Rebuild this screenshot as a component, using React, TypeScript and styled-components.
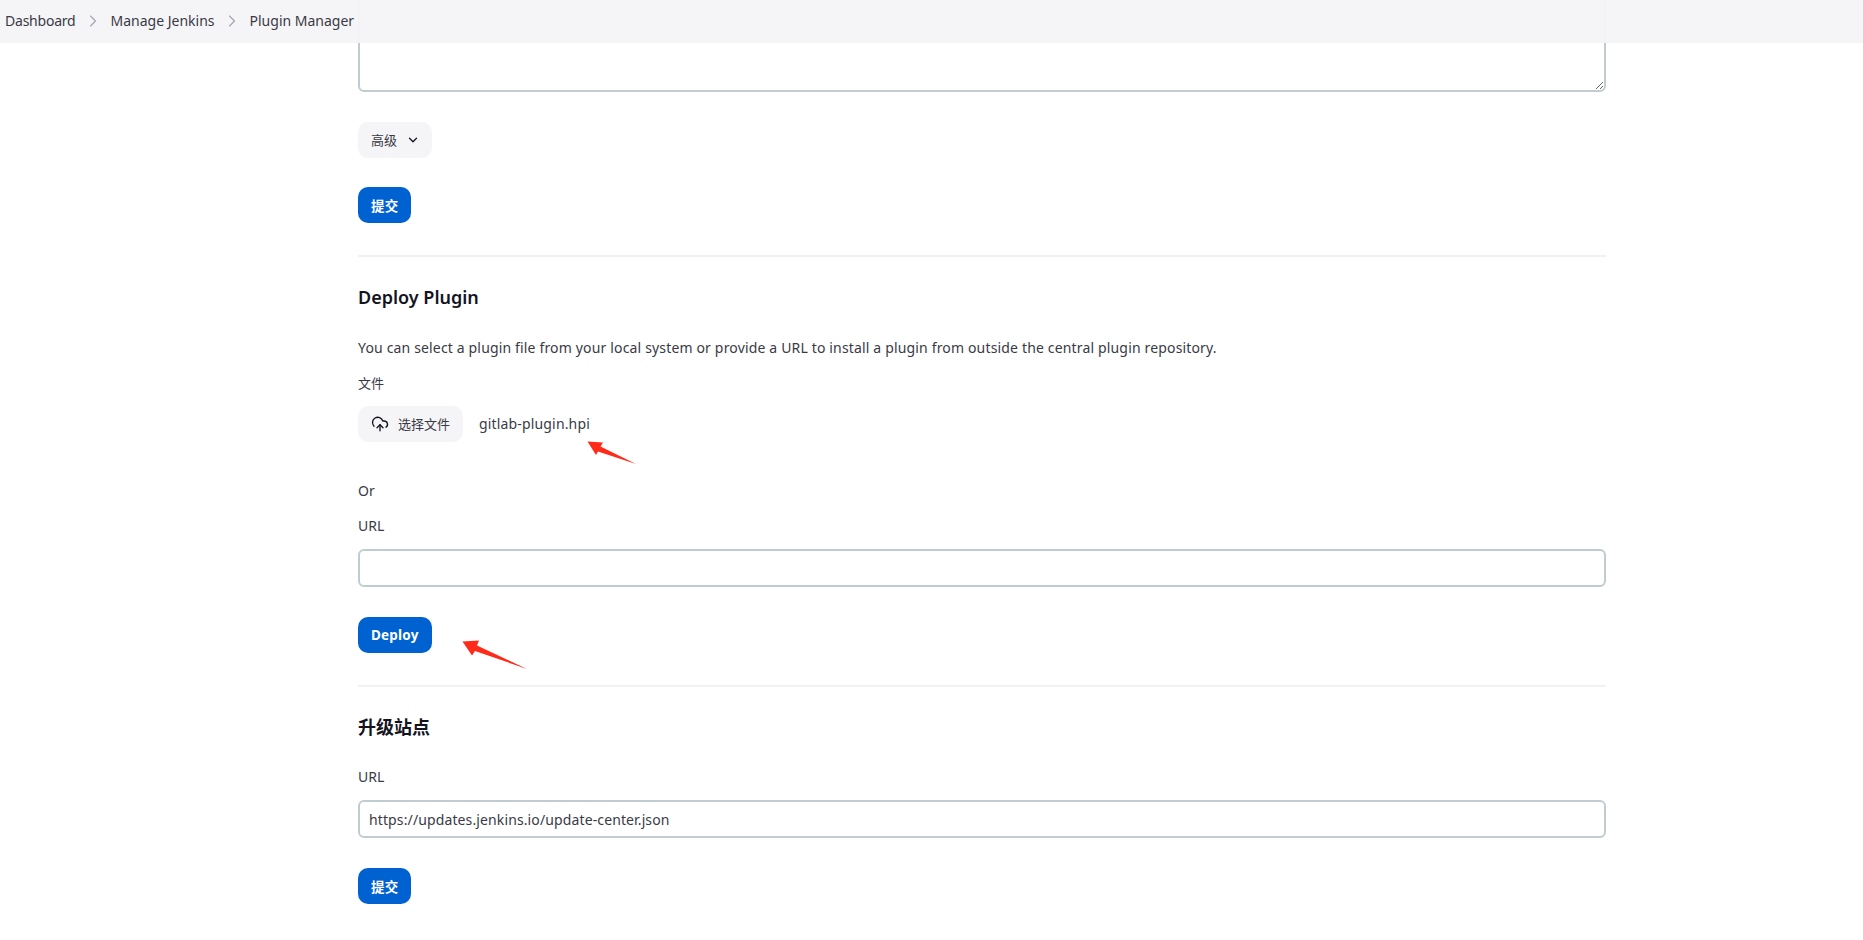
import styled, { createGlobalStyle } from "styled-components"
import { ChevronDown, ChevronRight, CloudUpload } from "lucide-react"

const GlobalStyle = createGlobalStyle`
    html, body {
        margin: 0;
        height: 100%;
        overflow: hidden;
        background: #fff;
    }
    body {
        font-family: "Noto Sans", "Noto Sans CJK SC", sans-serif;
        font-size: 14px;
        color: #3a3a46;
    }
    * {
        box-sizing: border-box;
    }
`

const crumbs = ["Dashboard", "Manage Jenkins", "Plugin Manager"]

export default function App() {
    return (
        <>
            <GlobalStyle />
            <Page>
                <Breadcrumbs>
                    {crumbs.map((c, i) => (
                        <Crumb key={c}>
                            <CrumbText>{c}</CrumbText>
                            {i < crumbs.length - 1 && (
                                <Sep>
                                    <ChevronRight size={20} strokeWidth={1.3} />
                                </Sep>
                            )}
                        </Crumb>
                    ))}
                </Breadcrumbs>
                <Main>
                    <TextArea />
                    <SoftButton>
                        <SoftLabel>高级</SoftLabel>
                        <ChevronDown size={14} strokeWidth={2.2} color="#14141f" />
                    </SoftButton>
                    <PrimaryButton>提交</PrimaryButton>
                    <Divider />
                    <Heading>Deploy Plugin</Heading>
                    <Intro>You can select a plugin file from your local system or provide a URL to install a plugin from outside the central plugin repository.</Intro>
                    <Label>文件</Label>
                    <FileRow>
                        <FileButton>
                            <CloudUpload size={18} strokeWidth={1.8} color="#14141f" />
                            <SoftLabel>选择文件</SoftLabel>
                        </FileButton>
                        <FileName>gitlab-plugin.hpi</FileName>
                        <Arrow width="50" height="24" viewBox="0 0 50 24">
                            <path d="M0.5 0.5 L16 1.5 L13.5 5.5 L49 23 L11 10.5 L9 14 Z" fill="#ff2a1a" />
                        </Arrow>
                    </FileRow>
                    <Or>Or</Or>
                    <UrlLabel $top={15}>URL</UrlLabel>
                    <TextInput />
                    <DeployRow>
                        <PrimaryButton>Deploy</PrimaryButton>
                        <DeployArrow width="66" height="30" viewBox="0 0 66 30">
                            <path d="M0.5 1.5 L17 0.5 L15 5.5 L65 29 L13 11 L10 15.5 Z" fill="#ff2a1a" />
                        </DeployArrow>
                    </DeployRow>
                    <Divider />
                    <Heading>升级站点</Heading>
                    <UrlLabel $top={27}>URL</UrlLabel>
                    <TextInput defaultValue="https://updates.jenkins.io/update-center.json" />
                    <PrimaryButton>提交</PrimaryButton>
                </Main>
            </Page>
        </>
    )
}

const Page = styled.div`
    position: relative;
    height: 940px;
    overflow: hidden;
`

const Breadcrumbs = styled.nav`
    position: absolute;
    top: 0;
    left: 0;
    right: 0;
    z-index: 2;
    height: 43px;
    display: flex;
    align-items: center;
    padding-left: 5px;
    padding-bottom: 2px;
    background: rgba(245, 245, 247, 0.96);
`

const Crumb = styled.div`
    display: flex;
    align-items: center;
    line-height: 20px;
    &:first-child {
        letter-spacing: -0.22px;
    }
`

const CrumbText = styled.span`
    white-space: nowrap;
`

const Sep = styled.span`
    display: flex;
    width: 35px;
    justify-content: center;
    color: #a3a3b3;
`

const Main = styled.main`
    width: 1248px;
    margin-left: 358px;
    display: flex;
    flex-direction: column;
    align-items: flex-start;
`

const TextArea = styled.textarea`
    display: block;
    width: 100%;
    height: 112px;
    margin-top: -20px;
    margin-bottom: 30px;
    border: 2px solid #c0ccd0;
    border-radius: 6px;
    background: #fff;
    resize: vertical;
    outline: none;
`

const SoftButton = styled.button`
    height: 36px;
    padding: 0 12px 0 13px;
    display: flex;
    align-items: center;
    gap: 9px;
    border: none;
    border-radius: 10px;
    background: #f5f5f7;
    font: inherit;
    font-size: 13px;
    color: inherit;
    margin-bottom: 29px;
`

const SoftLabel = styled.span`
    position: relative;
    top: -1px;
`

const PrimaryButton = styled.button`
    height: 36px;
    padding: 0 13px;
    border: none;
    border-radius: 10px;
    background: #0062d1;
    color: #fff;
    font: inherit;
    font-size: 13.5px;
    font-weight: 700;
    letter-spacing: 0.2px;
`

const Divider = styled.hr`
    width: 100%;
    height: 2px;
    margin: 32px 0 0;
    border: none;
    background: #f2f2f5;
`

const Heading = styled.h2`
    margin: 27px 0 0;
    font-size: 18px;
    line-height: 26px;
    font-weight: 600;
    color: #14141f;
`

const Intro = styled.p`
    margin: 28px 0 0;
    line-height: 20px;
    letter-spacing: 0.16px;
`

const Label = styled.div`
    margin-top: 15px;
    font-size: 13px;
    line-height: 20px;
`

const FileRow = styled.div`
    position: relative;
    display: flex;
    align-items: center;
    gap: 16px;
    margin-top: 13px;
`

const FileButton = styled.button`
    height: 36px;
    padding: 0 13px;
    display: flex;
    align-items: center;
    gap: 9px;
    border: none;
    border-radius: 10px;
    background: #f5f5f7;
    font: inherit;
    font-size: 13px;
    color: inherit;
`

const FileName = styled.span`
    line-height: 20px;
    letter-spacing: 0.16px;
`

const Arrow = styled.svg`
    position: absolute;
    left: 229px;
    top: 35px;
`

const Or = styled.div`
    margin-top: 39px;
    line-height: 20px;
`

const UrlLabel = styled.div<{ $top: number }>`
    margin-top: ${p => p.$top}px;
    line-height: 20px;
`

const TextInput = styled.input`
    width: 100%;
    height: 38px;
    margin: 13px 0 30px;
    padding: 0 9px;
    border: 2px solid #c0ccd0;
    border-radius: 6px;
    background: #fff;
    font: inherit;
    letter-spacing: 0.12px;
    color: inherit;
    outline: none;
`

const DeployRow = styled.div`
    position: relative;
`

const DeployArrow = styled.svg`
    position: absolute;
    left: 104px;
    top: 23px;
`
